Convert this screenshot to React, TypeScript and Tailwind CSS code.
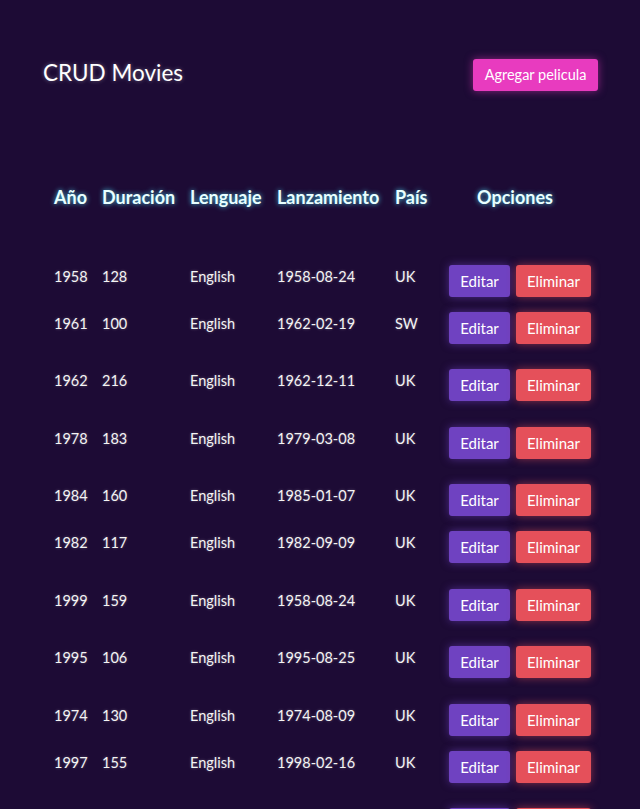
import React from 'react';

type Movie = {
  year: string;
  duration: string;
  language: string;
  release: string;
  country: string;
  rowHeight: string;
};

const movies: Movie[] = [
  { year: '1958', duration: '128', language: 'English', release: '1958-08-24', country: 'UK', rowHeight: 'h-[47px]' },
  { year: '1961', duration: '100', language: 'English', release: '1962-02-19', country: 'SW', rowHeight: 'h-[57px]' },
  { year: '1962', duration: '216', language: 'English', release: '1962-12-11', country: 'UK', rowHeight: 'h-[58px]' },
  { year: '1978', duration: '183', language: 'English', release: '1979-03-08', country: 'UK', rowHeight: 'h-[57px]' },
  { year: '1984', duration: '160', language: 'English', release: '1985-01-07', country: 'UK', rowHeight: 'h-[47px]' },
  { year: '1982', duration: '117', language: 'English', release: '1982-09-09', country: 'UK', rowHeight: 'h-[58px]' },
  { year: '1999', duration: '159', language: 'English', release: '1958-08-24', country: 'UK', rowHeight: 'h-[57px]' },
  { year: '1995', duration: '106', language: 'English', release: '1995-08-25', country: 'UK', rowHeight: 'h-[58px]' },
  { year: '1974', duration: '130', language: 'English', release: '1974-08-09', country: 'UK', rowHeight: 'h-[47px]' },
  { year: '1997', duration: '155', language: 'English', release: '1998-02-16', country: 'UK', rowHeight: 'h-[57px]' },
  { year: '1996', duration: '140', language: 'English', release: '1996-05-12', country: 'UK', rowHeight: 'h-[57px]' },
];

const cols = 'grid grid-cols-[48px_88px_87px_118px_54px_148px]';

export default function App() {
  return (
    <div className="min-h-screen bg-[#1d0b35] px-[43px] pt-[59px] font-['Lato','Noto_Sans',sans-serif] text-white overflow-hidden">
      <div className="w-[555px]">
        {/* Header */}
        <div className="flex items-center justify-between h-[32px]">
          <h1 className="text-[22.5px] leading-none -mt-[4px] [text-shadow:0_0_4px_rgba(255,255,255,0.35)]">CRUD Movies</h1>
          <button className="h-[32px] w-[125px] rounded-[3px] bg-[#e83bbf] text-[14.5px] text-white shadow-[0_0_8px_rgba(232,59,191,0.55)]">
            Agregar pelicula
          </button>
        </div>

        {/* Table */}
        <div className="mt-[93px] pl-[11px]">
          <div className={`${cols} items-center h-[24px] text-[18px] font-bold text-[#e8ffff] [text-shadow:0_0_5px_rgba(80,230,255,0.85)]`}>
            <div>Año</div>
            <div>Duración</div>
            <div>Lenguaje</div>
            <div>Lanzamiento</div>
            <div>País</div>
            <div className="text-center pr-[16px]">Opciones</div>
          </div>

          <div className="mt-[47px]">
            {movies.map((m, i) => (
              <div key={i} className={`${cols} items-start ${m.rowHeight} text-[14.5px] text-[#f4f4f4] [text-shadow:0_0_3px_rgba(255,255,255,0.3)]`}>
                <div className="h-[43px] flex items-center">{m.year}</div>
                <div className="h-[43px] flex items-center">{m.duration}</div>
                <div className="h-[43px] flex items-center">{m.language}</div>
                <div className="h-[43px] flex items-center">{m.release}</div>
                <div className="h-[43px] flex items-center">{m.country}</div>
                <div className="flex gap-[6px] pt-[10px]">
                  <button className="h-[32px] w-[61px] rounded-[3px] bg-[#6f42c1] text-[15px] text-white shadow-[0_0_8px_rgba(111,66,193,0.6)]">
                    Editar
                  </button>
                  <button className="h-[32px] w-[75px] rounded-[3px] bg-[#e5505a] text-[15px] text-white shadow-[0_0_8px_rgba(229,80,90,0.55)]">
                    Eliminar
                  </button>
                </div>
              </div>
            ))}
          </div>
        </div>
      </div>
    </div>
  );
}
